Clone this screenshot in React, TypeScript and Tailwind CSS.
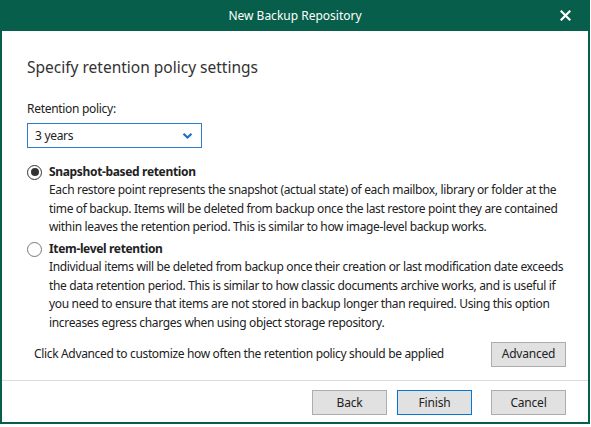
import React from "react";

const FONT = { fontFamily: '"Noto Sans", "Open Sans", sans-serif' };

function Btn({ children, primary }: { children: React.ReactNode; primary?: boolean }) {
  return (
    <div
      className={
        "w-[75px] h-[25px] flex items-center justify-center text-[12px] text-[#222] bg-[#e1e1e1] border tracking-[-0.2px] " +
        (primary ? "border-[#0078d7]" : "border-[#adadad]")
      }
    >
      {children}
    </div>
  );
}

function Lines({ lines }: { lines: string[] }) {
  return (
    <div className="pl-[22px] text-[12px] leading-[18.5px] tracking-[-0.34px]">
      {lines.map((l, i) => (
        <div key={i} className="whitespace-nowrap">
          {l}
        </div>
      ))}
    </div>
  );
}

export default function App() {
  return (
    <div className="w-[591px] h-[427px] bg-white overflow-hidden" style={FONT}>
      <div className="w-[590px] h-[424px] flex flex-col border-x-2 border-b-2 border-[#075e4a] bg-white">
        <div className="h-[31px] shrink-0 bg-[#075e4a] flex items-center justify-center relative text-white text-[12px]">
          New Backup Repository
          <svg className="absolute right-[17px] top-[10px]" width="11" height="11" viewBox="0 0 11 11">
            <path d="M1.5 1.5 L9.5 9.5 M9.5 1.5 L1.5 9.5" stroke="white" strokeWidth="2.2" strokeLinecap="square" />
          </svg>
        </div>
        <div className="flex-1 flex flex-col pl-[25px] pr-[18px] text-[#222]">
          <div className="mt-[24px] text-[15.5px] leading-[24px] text-[#333]">Specify retention policy settings</div>
          <div className="mt-[21px] text-[12px] leading-[18px] tracking-[-0.3px]">Retention policy:</div>
          <div className="mt-[5px] w-[175px] h-[25px] border border-[#2e7bcf] flex items-center justify-between pl-[7px] pr-[8px] text-[12px] tracking-[-0.3px]">
            <span>3 years</span>
            <svg width="11" height="8" viewBox="0 0 11 8">
              <path d="M1.5 1.8 L5.5 5.6 L9.5 1.8" stroke="#1f6fc5" strokeWidth="2.2" fill="none" />
            </svg>
          </div>

          <div className="mt-[15px] flex items-center h-[18px]">
            <div className="w-[15px] h-[15px] rounded-full border border-[#333] flex items-center justify-center bg-white">
              <div className="w-[8px] h-[8px] rounded-full bg-[#333]" />
            </div>
            <span className="ml-[7px] text-[12px] font-bold leading-[18px] tracking-[-0.34px]">Snapshot-based retention</span>
          </div>
          <Lines
            lines={[
              "Each restore point represents the snapshot (actual state) of each mailbox, library or folder at the",
              "time of backup. Items will be deleted from backup once the last restore point they are contained",
              "within leaves the retention period. This is similar to how image-level backup works.",
            ]}
          />

          <div className="mt-[3.5px] flex items-center h-[18px]">
            <div className="w-[15px] h-[15px] rounded-full border border-[#777] bg-white" />
            <span className="ml-[7px] text-[12px] font-bold leading-[18px] tracking-[-0.34px]">Item-level retention</span>
          </div>
          <Lines
            lines={[
              "Individual items will be deleted from backup once their creation or last modification date exceeds",
              "the data retention period. This is similar to how classic documents archive works, and is useful if",
              "you need to ensure that items are not stored in backup longer than required. Using this option",
              "increases egress charges when using object storage repository.",
            ]}
          />

          <div className="mt-[9.5px] flex items-center justify-between pl-[7px] pr-[4px]">
            <span className="text-[12px] whitespace-nowrap tracking-[-0.34px]">
              Click Advanced to customize how often the retention policy should be applied
            </span>
            <Btn>Advanced</Btn>
          </div>
        </div>
        <div className="h-px shrink-0 bg-[#dcdcdc]" />
        <div className="h-[41px] shrink-0 flex items-start justify-end pt-[9px] pr-[22px]">
          <Btn>Back</Btn>
          <div className="w-[10px]" />
          <Btn primary>Finish</Btn>
          <div className="w-[19px]" />
          <Btn>Cancel</Btn>
        </div>
      </div>
    </div>
  );
}
